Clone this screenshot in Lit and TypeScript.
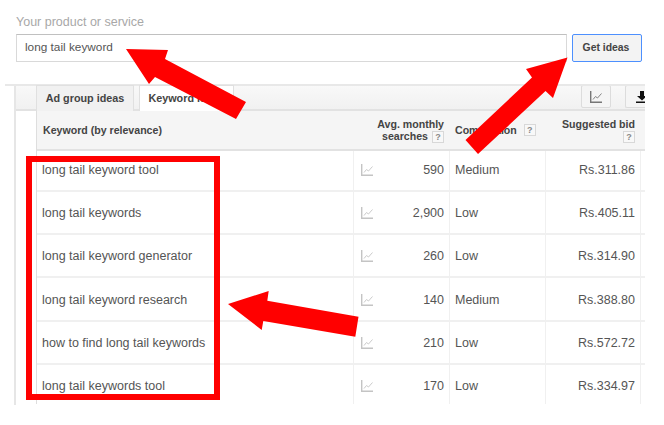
import { LitElement, html, css, svg } from "lit";
import { customElement } from "lit/decorators.js";

const rows = [
  ["long tail keyword tool", "590", "Medium", "Rs.311.86"],
  ["long tail keywords", "2,900", "Low", "Rs.405.11"],
  ["long tail keyword generator", "260", "Low", "Rs.314.90"],
  ["long tail keyword research", "140", "Medium", "Rs.388.80"],
  ["how to find long tail keywords", "210", "Low", "Rs.572.72"],
  ["long tail keywords tool", "170", "Low", "Rs.334.97"],
];

const chart = () => html`<svg viewBox="0 0 12 12" width="12" height="12" fill="none">
  <path d="M0.7 0V11.3H12" stroke="currentColor" stroke-width="1.4"/>
  <path d="M3 8.5L5.5 5.5L7.5 7L11.5 2.5" stroke="currentColor" stroke-width="0.9"/>
</svg>`;

@customElement("app-root")
export class AppRoot extends LitElement {
  static styles = css`
    :host { display: block; position: relative; width: 664px; height: 425px; background: #fff; overflow: hidden;
      font-family: "Liberation Sans", Arial, sans-serif; color: #444; }
    .top { padding: 15px 0 0 16px; height: 84px; box-sizing: border-box; }
    .label { font-size: 12.5px; line-height: 15px; color: #a8a8a8; height: 19px; }
    .search { display: flex; gap: 5px; }
    .input { width: 551px; height: 28px; box-sizing: border-box; border: 1px solid #d9d9d9; border-top-color: #c0c0c0;
      font-size: 11.8px; line-height: 25px; padding-left: 8px; color: #555; }
    .btn { width: 70px; height: 28px; box-sizing: border-box; border: 1px solid #4d90fe; border-radius: 2px; background: #f3f3f3;
      font-size: 10.4px; font-weight: bold; color: #444; text-align: center; line-height: 25px; padding-right: 2px; }
    .panel { margin-left: 14px; width: 631px; height: 321px; box-sizing: border-box; border-left: 2px solid #e6e6e6; position: relative; }
    .rule { position: absolute; left: -11px; right: 0; top: 0; height: 2px; background: #e8e8e8; }
    .toolbar { height: 27px; box-sizing: border-box; padding: 1px 0 0 20px; display: flex; align-items: flex-end;
      background: linear-gradient(#f9f9f9, #f1f1f1); border-bottom: 2px solid #e2e2e2; }
    .tab { height: 26px; box-sizing: border-box; font-size: 10.8px; font-weight: bold; line-height: 24px; text-align: center; border: 1px solid #e0e0e0; border-bottom: 0; position: relative; top: 2px; }
    .tab.a { width: 98px; background: #f1f1f1; }
    .tab.b { width: 95px; margin-left: 5px; background: #fff; }
    .tools { margin-left: auto; display: flex; gap: 14px; align-self: flex-start; }
    .tool { width: 30px; height: 23px; box-sizing: border-box; border: 1px solid #dcdcdc; border-radius: 2px; background: #f5f5f5; color: #777;
      display: flex; align-items: center; justify-content: center; }
    .tool.dl { width: 20px; border-right: 0; border-radius: 2px 0 0 2px; justify-content: flex-start; padding-left: 10px; overflow: hidden; }
    .grid { margin-left: 20px; border-left: 1px solid #dedede; display: grid; grid-template-columns: 316px 96px 96px 96px 4px; }
    .h { height: 40px; box-sizing: border-box; background: #f5f5f5; border-bottom: 2px solid #e2e2e2; font-size: 10.6px; font-weight: bold; color: #444; line-height: 12px; display: flex; align-items: center; }
    .h.kw { padding: 0 0 1px 6px; }
    .h.avg { justify-content: flex-end; text-align: right; padding-right: 5px; }
    .h.comp { padding-left: 6px; gap: 3px; padding-bottom: 1px; }
    .h.bid { justify-content: flex-end; text-align: right; padding-right: 6px; }
    .q { display: inline-block; box-sizing: border-box; width: 12px; height: 12px; border: 1px solid #d8d8d8; background: #f8f8f8; color: #888; font-size: 9px; line-height: 10px; text-align: center; font-weight: bold; vertical-align: top; margin: 1px 0 0 4px; }
    .c { height: 43px; box-sizing: border-box; border-bottom: 2px solid #f0f0f0; font-size: 12.5px; color: #555; display: flex; align-items: center; padding-top: 1px; }
    .c.first { height: 41px; padding-top: 0; padding-bottom: 1px; }
    .c.tall { height: 44px; padding-top: 2px; }
    .c.last { height: 39px; border-bottom: 0; padding-top: 2px; }
    .kwc { padding-left: 5px; }
    .vol { border-left: 1px solid #f0f0f0; padding-left: 7px; padding-right: 5px; justify-content: space-between; }
    .vol svg { color: #c4c4c4; }
    .cmp { border-left: 1px solid #f0f0f0; padding-left: 5px; }
    .price { border-left: 1px solid #f0f0f0; border-right: 1px solid #f0f0f0; justify-content: flex-end; padding-right: 5px; }
    .overlay { position: absolute; left: 0; top: 0; pointer-events: none; }
    .box { position: absolute; left: 26px; top: 156px; width: 194px; height: 244px; box-sizing: border-box; border: 6px solid #f00; }
  `;

  render() {
    return html`
      <div class="top">
        <div class="label">Your product or service</div>
        <div class="search">
          <div class="input">long tail keyword</div>
          <div class="btn">Get ideas</div>
        </div>
      </div>
      <div class="panel">
        <div class="rule"></div>
        <div class="toolbar">
          <div class="tab a">Ad group ideas</div>
          <div class="tab b">Keyword ideas</div>
          <div class="tools">
            <div class="tool">${chart()}</div>
            <div class="tool dl"><svg viewBox="0 0 12 12" width="12" height="12" style="flex:none"><path d="M4 0H8V5H11L6 9.5L1 5H4Z M0 10.5H12V12H0Z" fill="#111"/></svg></div>
          </div>
        </div>
        <div class="grid">
          <div class="h kw">Keyword (by relevance)</div>
          <div class="h avg"><div>Avg. monthly<br />searches<span class="q">?</span></div></div>
          <div class="h comp">Competition<span class="q">?</span></div>
          <div class="h bid"><div>Suggested bid<br /><span class="q">?</span></div></div>
          <div class="h"></div>
          ${rows.map((r, i) => {
            const l = i === 0 ? "first" : i === 3 ? "tall" : i === rows.length - 1 ? "last" : "";
            return html`
              <div class="c kwc ${l}">${r[0]}</div>
              <div class="c vol ${l}">${chart()}<span>${r[1]}</span></div>
              <div class="c cmp ${l}">${r[2]}</div>
              <div class="c price ${l}">${r[3]}</div>
              <div class="c ${l}"></div>`;
          })}
        </div>
      </div>
      <svg class="overlay" width="664" height="425" viewBox="0 0 664 425">
        ${svg`<polygon fill="#f00" points="126,49 168,50 165,59 246,102 236,119 155,77 149,84"/>
        <polygon fill="#f00" points="567.5,57.5 526,69 532,77.5 465.5,140 478,154 545.5,91 553,98"/>
        <polygon fill="#f00" points="228,304 268.7,291 267.3,300.7 358.5,316.7 355.3,336.7 263.3,321 261.7,330"/>`}
      </svg>
      <div class="box"></div>
    `;
  }
}
